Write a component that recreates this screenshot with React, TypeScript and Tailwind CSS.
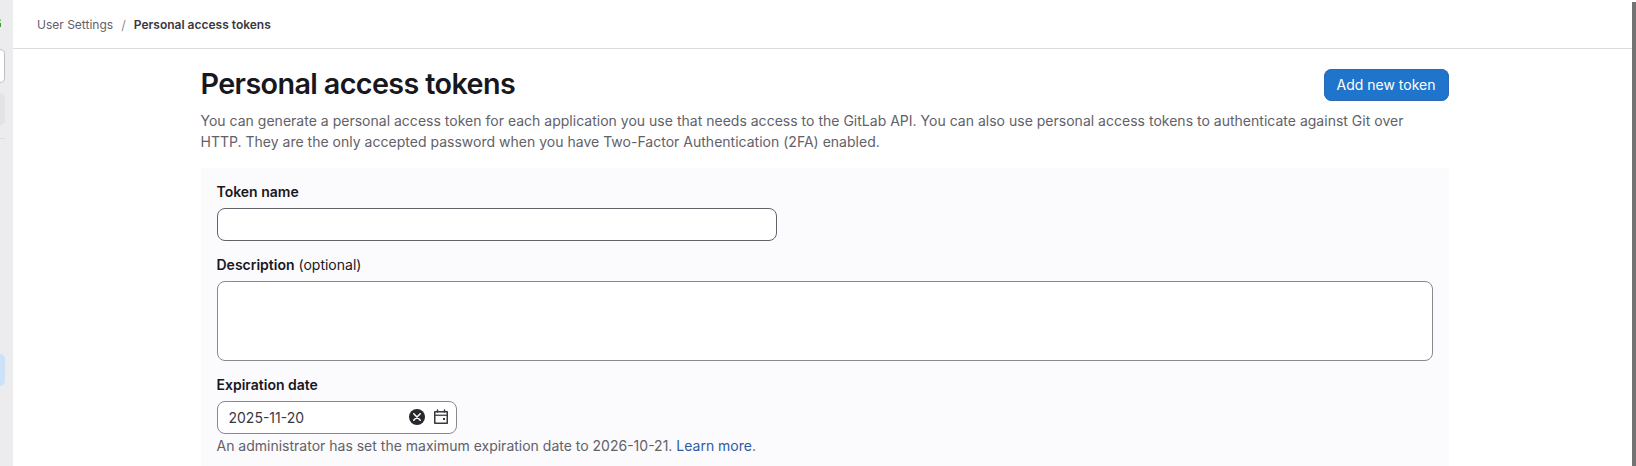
const field = "block rounded-lg border bg-white text-[14px] text-[#3a383f] outline-none";

function ClearIcon() {
  return (
    <svg width="16" height="16" viewBox="0 0 16 16" fill="none" aria-hidden="true">
      <circle cx="8" cy="8" r="8" fill="#28272d" />
      <path d="M4.75 4.75l6.5 6.5M11.25 4.75l-6.5 6.5" stroke="#fff" strokeWidth="1.5" strokeLinecap="round" />
    </svg>
  );
}

function CalendarIcon() {
  return (
    <svg width="16" height="16" viewBox="0 0 16 16" fill="none" stroke="#3a383f" strokeWidth="1.5" aria-hidden="true">
      <path d="M1.75 2.75h12.5v11.5H1.75z" strokeLinejoin="round" />
      <path d="M2 6.25h12" strokeWidth="1.25" />
      <path d="M4.5 1v2M11.5 1v2" strokeLinecap="round" />
      <path d="M10 9h2v2h-2z" fill="#3a383f" stroke="none" />
    </svg>
  );
}

function Sidebar() {
  return (
    <aside className="flex w-[13px] shrink-0 flex-col overflow-hidden bg-[#ececef]">
      <div className="mt-[19px] flex h-[8px] w-[1px] flex-col">
        <span className="h-[2px] bg-[#8fd08a]" />
        <span className="h-[1px] bg-[#c5e4c3]" />
        <span className="mt-[1px] h-[4px] bg-[#3f9c35]" />
      </div>
      <div className="mt-[22px] h-[34px] w-[5px] rounded-r-lg border border-l-0 border-[#bfbfc3] bg-white" />
      <div className="mt-[10px] h-[32px] w-[5px] rounded-r-lg bg-[#e3e3e6]" />
      <div className="mt-[13px] h-px w-[5px] bg-[#dcdcde]" />
      <div className="mt-[215px] h-[32px] w-[5px] rounded-r-lg bg-[#cbe2f9]" />
    </aside>
  );
}

export default function App() {
  return (
    <div className="flex h-[466px] w-full overflow-hidden bg-white font-['Inter','Noto_Sans',sans-serif] text-[14px] leading-[21px] text-[#3a383f]">
      <Sidebar />
      <div className="flex min-w-0 flex-1 flex-col">
        <nav className="flex h-[49px] shrink-0 items-center border-b border-[#dcdcde] pt-[2px] pl-6 text-[12px] leading-4">
          <span className="text-[#626168]">User Settings</span>
          <span className="w-[20.7px] pb-px text-center text-[13px] font-light text-[#737278]">/</span>
          <span className="font-semibold">Personal access tokens</span>
        </nav>
        <main className="ml-[187.5px] w-[1248px]">
          <header className="flex items-start justify-between pt-5">
            <h1 className="mt-[-3px] text-[28.75px] leading-9 font-semibold tracking-[-0.62px] text-[#18171d]">
              Personal access tokens
            </h1>
            <button className="h-8 rounded-lg bg-[#1f75cb] px-[13px] leading-4 text-white shadow-[inset_0_0_0_1px_#2f68b4]">
              Add new token
            </button>
          </header>
          <p className="mt-2 h-[42px] w-[1248px] pr-6 tracking-[0.012px] text-[#626168]">
            You can generate a personal access token for each application you use that needs access to the GitLab API.
            You can also use personal access tokens to authenticate against Git over HTTP. They are the only accepted
            password when you have Two-Factor Authentication (2FA) enabled.
          </p>
          <form className="mt-4 h-[320px] rounded-t-[4px] bg-[#fbfafd] px-4 pt-[13px]">
            <label htmlFor="name" className="block h-[27px] font-semibold text-[#18171d]">
              Token name
            </label>
            <input id="name" className={field + " h-[33px] w-[560px] border-[#626168] px-3"} />
            <label htmlFor="description" className="mt-[13px] block h-[27px] text-[#18171d]">
              <span className="font-semibold">Description</span> (optional)
            </label>
            <textarea id="description" className={field + " h-[80px] w-full resize-none border-[#89888d] px-3"} />
            <label htmlFor="expiration" className="mt-[13px] block h-[27px] font-semibold text-[#18171d]">
              Expiration date
            </label>
            <div className={field + " flex h-[33px] w-[240px] items-center border-[#89888d] pr-[7px] pl-[11px]"}>
              <input id="expiration" defaultValue="2025-11-20" className="min-w-0 flex-1 outline-none" />
              <span className="flex gap-2 pb-px">
                <ClearIcon />
                <CalendarIcon />
              </span>
            </div>
            <p className="mt-[1px] text-[#626168]">
              An administrator has set the maximum expiration date to 2026-10-21.{" "}
              <a href="#" className="text-[#2f5ca0]">Learn more</a>.
            </p>
          </form>
        </main>
      </div>
      <div className="mt-[2px] w-1 shrink-0 bg-[#737373]" />
    </div>
  );
}
